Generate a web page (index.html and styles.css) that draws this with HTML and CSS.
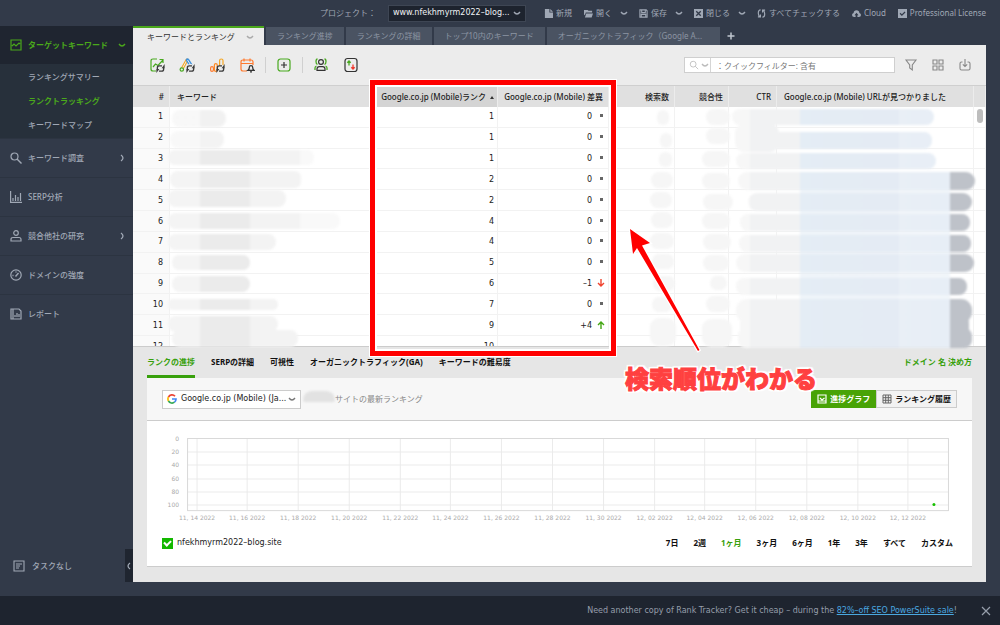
FILE: index.html
```html
<!DOCTYPE html>
<html lang="ja">
<head>
<meta charset="utf-8">
<title>Rank Tracker</title>
<link rel="stylesheet" href="styles.css">
</head>
<body>
<svg class="defs" aria-hidden="true">
  <symbol id="chev" viewBox="0 0 8 8"><path d="M1 3q1.500 2 3 2t3-2" fill="none" stroke="currentColor" stroke-width="1.300"/></symbol>
  <symbol id="sync" viewBox="0 0 12 12"><path d="M1.800 7V5Q1.800 2.500 4.500 2.500H8M10.200 5V7Q10.200 9.500 7.500 9.500H4" fill="none" stroke="#3b3b3b" stroke-width="1.800"/><path d="M7.500 5.500L11.500 0V5.500zM4.500 6.500L.5 12V6.500z" fill="#3b3b3b"/></symbol>
</svg>
<div class="app">
  <header class="topbar">
    <label for="project">プロジェクト：</label>
    <span class="combo"><select id="project"><option>www.nfekhmyrm2022–blog...</option></select><svg class="chev"><use href="#chev"/></svg></span>
    <button class="act"><svg viewBox="0 0 10 10"><path d="M1 0h5v4h4v6H1zM7 0l3 3H7z" fill="currentColor"/></svg>新規</button>
    <button class="act"><svg viewBox="0 0 10 10"><path d="M0 1h4l1 1h4v2H2L1 7 0 6zM2.500 5H10L8.500 9.500H1z" fill="currentColor"/></svg>開く</button>
    <button class="act more" aria-label="開くメニュー"><svg class="chev"><use href="#chev"/></svg></button>
    <button class="act"><svg viewBox="0 0 10 10"><path d="M1 1h7l1 1v7H1zM3 1v3h4V1M2.500 9V6h5v3" fill="none" stroke="currentColor" stroke-width="1.200"/></svg>保存</button>
    <button class="act more" aria-label="保存メニュー"><svg class="chev"><use href="#chev"/></svg></button>
    <button class="act"><svg viewBox="0 0 10 10"><path d="M0 0h10v10H0z" fill="currentColor"/><path d="M2.500 2.500l5 5M7.500 2.500l-5 5" stroke="#323a49" stroke-width="1.500"/></svg>閉じる</button>
    <button class="act more" aria-label="閉じるメニュー"><svg class="chev"><use href="#chev"/></svg></button>
    <button class="act"><svg viewBox="0 0 10 10"><path d="M4 1Q1.500 1 1.500 4v1q0 2 1.500 3.500M1 8.800h2.800V6M6 9q2.500 0 2.500-3V5q0-2-1.500-3.500M9 1.200H6.200V4" fill="none" stroke="currentColor" stroke-width="1.300"/></svg>すべてチェックする</button>
    <button class="act"><svg viewBox="0 0 10 10"><path d="M2.500 9Q0 9 0 6.800 0 5 1.800 4.500 2 1.500 5 1.500T8.200 4.500Q10 5 10 6.800 10 9 7.500 9H6V7h1.300L5 4.300 2.700 7H4v2z" fill="currentColor"/></svg>Cloud</button>
    <button class="act"><svg viewBox="0 0 10 10"><path d="M0 0h10v10H0z" fill="currentColor"/><path d="M2.300 4.800l2 2 3.500-3.500" fill="none" stroke="#323a49" stroke-width="1.400"/></svg>Professional License</button>
  </header>
  <div class="body">
    <nav class="side">
      <a class="item current" href="#"><svg viewBox="0 0 12 12"><path d="M1 1h10v10H1zM2 7l2-2 2 2 3-3 1 1" fill="none" stroke="currentColor" stroke-width="1.200"/></svg>ターゲットキーワード<svg class="chev end"><use href="#chev"/></svg></a>
      <div class="sub">
        <a href="#">ランキングサマリー</a>
        <a class="on" href="#">ランクトラッキング</a>
        <a href="#">キーワードマップ</a>
      </div>
      <a class="item" href="#"><svg viewBox="0 0 12 12"><circle cx="4.500" cy="4.500" r="3.500" fill="none" stroke="currentColor" stroke-width="1.200"/><path d="M7 7l4.500 4.500" stroke="currentColor" stroke-width="1.400"/></svg>キーワード調査<svg class="chev right end"><use href="#chev"/></svg></a>
      <a class="item" href="#"><svg viewBox="0 0 12 12"><path d="M.6 0v11.400H12M3 10V7M5.500 10V4M8 10V6M10.500 10V2" fill="none" stroke="currentColor" stroke-width="1.200"/></svg>SERP分析</a>
      <a class="item" href="#"><svg viewBox="0 0 12 12"><circle cx="6" cy="3" r="2.300" fill="none" stroke="currentColor" stroke-width="1.200"/><path d="M1 11V9.500Q1 7.500 3 7.500h6q2 0 2 2V11z" fill="none" stroke="currentColor" stroke-width="1.200"/></svg>競合他社の研究<svg class="chev right end"><use href="#chev"/></svg></a>
      <a class="item" href="#"><svg viewBox="0 0 12 12"><circle cx="6" cy="6" r="5.200" fill="none" stroke="currentColor" stroke-width="1.200"/><path d="M5.500 7.500L8.500 4M2.500 6.500h1M6 2.500v1" stroke="currentColor" stroke-width="1.400"/></svg>ドメインの強度</a>
      <a class="item" href="#"><svg viewBox="0 0 12 12"><path d="M3 1h6l2 2v8H3zM3 1H1v10h2M5 9V7M7 9V5M9 9V6" fill="none" stroke="currentColor" stroke-width="1.200"/></svg>レポート</a>
      <div class="tasks">
        <a class="item" href="#"><svg viewBox="0 0 12 12"><path d="M1 1h10v10H1zM3 4h6M3 6h4M3 8h3" fill="none" stroke="currentColor" stroke-width="1.100"/></svg>タスクなし</a>
        <button class="collapse" aria-label="サイドバーを閉じる"><svg class="chev left"><use href="#chev"/></svg></button>
      </div>
    </nav>
    <main class="main">
      <div class="tabs">
        <button class="tab active">キーワードとランキング<svg class="chev"><use href="#chev"/></svg></button>
        <button class="tab">ランキング進捗</button>
        <button class="tab">ランキングの詳細</button>
        <button class="tab">トップ10内のキーワード</button>
        <button class="tab wide">オーガニックトラフィック（Google A...</button>
        <button class="add" aria-label="タブを追加"><svg viewBox="0 0 8 8"><path d="M4 .5v7M.5 4h7" stroke="currentColor" stroke-width="1.500"/></svg></button>
      </div>
      <div class="toolbar">
        <button class="tool" aria-label="ランキングを更新"><svg viewBox="0 0 16 16"><path d="M8 2H4Q2 2 2 4v8q0 2 2 2h3M4 10l2.500-3L9 8.500 14 3M10.500 2.500H14V6" fill="none" stroke="#48a91f" stroke-width="1.200"/><use href="#sync" x="7" y="7" width="9" height="9"/></svg></button>
        <button class="tool" aria-label="Google広告データを更新"><svg viewBox="0 0 16 16"><path d="M3 12L8 3" stroke="#f5a623" stroke-width="3" stroke-linecap="round"/><path d="M3 12L8 3" stroke="#ececec"/><path d="M8.500 3L13 10" stroke="#4092dc" stroke-width="3.500" stroke-linecap="round"/><path d="M8.500 3L13 10" stroke="#ececec"/><circle cx="2.800" cy="12.500" r="1.700" fill="#ececec" stroke="#48a91f" stroke-width="1.200"/><circle cx="11.500" cy="11.500" r="4.500" fill="#ececec"/><use href="#sync" x="7" y="7" width="9" height="9"/></svg></button>
        <button class="tool" aria-label="アナリティクスを更新"><svg viewBox="0 0 16 16"><rect x="1.600" y="9.600" width="2.800" height="4.800" rx="1.400" fill="none" stroke="#ff7a2f" stroke-width="1.200"/><rect x="5.400" y="6.600" width="2.800" height="7.800" rx="1.400" fill="none" stroke="#ff8b25" stroke-width="1.200"/><path d="M10.600 9V3.500Q10.600 2 12.300 2T14 3.500V8" fill="none" stroke="#f5a623" stroke-width="1.200"/><use href="#sync" x="7" y="7" width="9" height="9"/></svg></button>
        <button class="tool" aria-label="スケジュール"><svg viewBox="0 0 16 16"><path d="M8 14H4q-2 0-2-2V5q0-2 2-2h8q2 0 2 2v3M2 6.500h12M5 1.500v3M11 1.500v3" fill="none" stroke="#ff7a2f" stroke-width="1.200"/><path d="M9 13.300q1.300-1 1.300-2.800 0-1.800 1.700-1.800t1.700 1.800q0 1.800 1.300 2.800zM11 14.800h2" fill="none" stroke="#333" stroke-width="1.300"/></svg></button>
        <span class="sep"></span>
        <button class="tool" aria-label="追加"><svg viewBox="0 0 16 16"><rect x="2" y="2" width="12" height="12" rx="2.500" fill="none" stroke="#48a91f" stroke-width="1.200"/><path d="M8 5v6M5 8h6" stroke="#333" stroke-width="1.200"/></svg></button>
        <span class="sep"></span>
        <button class="tool" aria-label="競合"><svg viewBox="0 0 16 16"><circle cx="8" cy="5" r="2.400" fill="none" stroke="#333" stroke-width="1.200"/><path d="M4 13.400V12q0-2.400 2.400-2.400h3.200Q12 9.600 12 12v1.400z" fill="none" stroke="#333" stroke-width="1.200"/><path d="M4.500 2Q3 2 3 4.500T4.500 7.500M11.500 2q1.500 0 1.500 2.500T11.500 7.500M2 13v-2q0-1.500 1.500-2M14 13v-2q0-1.500-1.500-2" fill="none" stroke="#48a91f" stroke-width="1.300"/></svg></button>
        <button class="tool" aria-label="ランク変動"><svg viewBox="0 0 16 16"><rect x="2" y="1.500" width="12" height="13" rx="2.500" fill="none" stroke="#333" stroke-width="1.200"/><path d="M6 8.500V4M4.300 5.700L6 4l1.700 1.700" fill="none" stroke="#48a91f" stroke-width="1.300"/><path d="M10 7.500V12M8.300 10.300L10 12l1.700-1.700" fill="none" stroke="#f03a2e" stroke-width="1.300"/></svg></button>
        <div class="search">
          <svg class="mag" viewBox="0 0 12 12"><circle cx="5" cy="5" r="3.500" fill="none" stroke="currentColor"/><path d="M7.500 7.500L11 11" stroke="currentColor"/></svg>
          <svg class="chev"><use href="#chev"/></svg>
          <input type="text" aria-label="クイックフィルター" placeholder="：クイックフィルター: 含有">
        </div>
        <button class="tool grey" aria-label="フィルター"><svg viewBox="0 0 16 16"><path d="M3 3h10L9.300 8v5L6.700 11V8z" fill="none" stroke="currentColor" stroke-width="1.100"/></svg></button>
        <button class="tool grey" aria-label="表示"><svg viewBox="0 0 16 16"><path d="M3 3h4v4H3zM9 3h4v4H9zM3 9h4v4H3zM9 9h4v4H9z" fill="none" stroke="currentColor" stroke-width="1.100"/></svg></button>
        <button class="tool grey" aria-label="エクスポート"><svg viewBox="0 0 16 16"><path d="M5.500 5H4.500Q3 5 3 6.500v5Q3 13 4.500 13h7q1.500 0 1.500-1.500v-5Q13 5 11.500 5h-1M8 2v7.500M5.800 7.300L8 9.500l2.200-2.200" fill="none" stroke="currentColor" stroke-width="1.100"/></svg></button>
      </div>

      <section class="grid">
        <div class="scroller">
          <table>
            <colgroup><col class="c-num"><col><col class="c-rank"><col class="c-diff"><col class="c-vol"><col class="c-comp"><col class="c-ctr"><col class="c-url"><col class="c-bar"></colgroup>
            <thead><tr><th>#</th><th class="left">キーワード</th><th class="sorted">Google.co.jp (Mobile)ランク <i class="up"></i></th><th>Google.co.jp (Mobile) 差異</th><th>検索数</th><th>競合性</th><th>CTR</th><th class="left">Google.co.jp (Mobile) URLが見つかりました</th><th></th></tr></thead>
            <tbody>
              <tr><td>1</td><td></td><td>1</td><td>0<i class="dot"></i></td><td></td><td></td><td></td><td></td><td></td></tr>
              <tr><td>2</td><td></td><td>1</td><td>0<i class="dot"></i></td><td></td><td></td><td></td><td></td><td></td></tr>
              <tr><td>3</td><td></td><td>1</td><td>0<i class="dot"></i></td><td></td><td></td><td></td><td></td><td></td></tr>
              <tr><td>4</td><td></td><td>2</td><td>0<i class="dot"></i></td><td></td><td></td><td></td><td></td><td></td></tr>
              <tr><td>5</td><td></td><td>2</td><td>0<i class="dot"></i></td><td></td><td></td><td></td><td></td><td></td></tr>
              <tr><td>6</td><td></td><td>4</td><td>0<i class="dot"></i></td><td></td><td></td><td></td><td></td><td></td></tr>
              <tr><td>7</td><td></td><td>4</td><td>0<i class="dot"></i></td><td></td><td></td><td></td><td></td><td></td></tr>
              <tr><td>8</td><td></td><td>5</td><td>0<i class="dot"></i></td><td></td><td></td><td></td><td></td><td></td></tr>
              <tr><td>9</td><td></td><td>6</td><td>–1<svg class="dir" viewBox="0 0 8 8"><path d="M4 0v7M1 4l3 3 3-3" fill="none" stroke="#f0432e" stroke-width="1.400"/></svg></td><td></td><td></td><td></td><td></td><td></td></tr>
              <tr><td>10</td><td></td><td>7</td><td>0<i class="dot"></i></td><td></td><td></td><td></td><td></td><td></td></tr>
              <tr><td>11</td><td></td><td>9</td><td>+4<svg class="dir" viewBox="0 0 8 8"><path d="M4 8V1M1 4l3-3 3 3" fill="none" stroke="#43a512" stroke-width="1.400"/></svg></td><td></td><td></td><td></td><td></td><td></td></tr>
              <tr><td>12</td><td></td><td>10</td><td></td><td></td><td></td><td></td><td></td><td></td></tr>
            </tbody>
          </table>
          <span class="scrollbar"></span>
        </div>
        <svg class="smudge-left" viewBox="0 0 220 262">
          <defs><linearGradient id="gl" gradientUnits="userSpaceOnUse" x1="0" y1="0" x2="200" y2="0">
            <stop offset=".2" stop-color="#f4f4f4"/><stop offset=".2" stop-color="#ebebeb"/><stop offset=".45" stop-color="#ebebeb"/><stop offset=".45" stop-color="#f3f3f3"/><stop offset=".7" stop-color="#f3f3f3"/><stop offset=".7" stop-color="#f9f9f9"/></linearGradient></defs>
          <g fill="url(#gl)" class="soft" transform="translate(-3)">
            <rect x="12" y="24" width="54" height="17" rx="8" opacity=".7"/>
            <rect x="10" y="45" width="54" height="17" rx="8" opacity=".6"/>
            <rect x="8" y="64" width="146" height="15" rx="7"/>
            <rect x="10" y="85" width="132" height="17" rx="8"/>
            <rect x="8" y="104" width="118" height="17" rx="8"/>
            <rect x="8" y="127" width="172" height="16" rx="8"/>
            <rect x="8" y="148" width="108" height="16" rx="8"/>
            <rect x="12" y="169" width="78" height="15" rx="7"/>
            <rect x="12" y="190" width="78" height="16" rx="8"/>
            <rect x="8" y="213" width="110" height="11" rx="5"/>
            <rect x="8" y="230" width="110" height="16" rx="8"/>
            <rect x="12" y="244" width="126" height="17" rx="8"/>
          </g>
        </svg>
        <svg class="smudge-right" viewBox="0 0 346 264">
          <defs><linearGradient id="gr" gradientUnits="userSpaceOnUse" x1="0" y1="0" x2="346" y2="0">
            <stop offset=".318" stop-color="#f7f7f7"/><stop offset=".318" stop-color="#f1f2f3"/><stop offset=".462" stop-color="#f1f2f3"/><stop offset=".462" stop-color="#e4edf5"/><stop offset=".75" stop-color="#e4ebf4"/><stop offset=".75" stop-color="#e9eff6"/><stop offset=".896" stop-color="#e7eef6"/><stop offset=".896" stop-color="#bec2c9"/></linearGradient></defs>
          <g fill="#f6f6f6" class="soft">
            <rect x="17" y="24" width="12" height="15" rx="6"/><rect x="20" y="47" width="12" height="15" rx="6"/><rect x="19" y="66" width="13" height="15" rx="6"/><rect x="11" y="86" width="22" height="16" rx="8"/><rect x="10" y="106" width="22" height="16" rx="8"/><rect x="11" y="126" width="22" height="16" rx="8"/><rect x="10" y="147" width="24" height="16" rx="8"/><rect x="12" y="168" width="22" height="15" rx="7"/><rect x="13" y="190" width="22" height="15" rx="7"/><rect x="12" y="211" width="20" height="15" rx="7"/><rect x="10" y="232" width="26" height="28" rx="9"/>
            <rect x="66" y="23" width="24" height="16" rx="8"/><rect x="66" y="42" width="24" height="16" rx="8"/><rect x="62" y="65" width="28" height="16" rx="8"/><rect x="62" y="87" width="28" height="16" rx="8"/><rect x="63" y="108" width="30" height="16" rx="8"/><rect x="62" y="127" width="28" height="16" rx="8"/><rect x="63" y="148" width="28" height="16" rx="8"/><rect x="63" y="169" width="26" height="16" rx="8"/><rect x="70" y="190" width="17" height="14" rx="7"/><rect x="66" y="210" width="24" height="16" rx="8"/><rect x="62" y="233" width="30" height="28" rx="9"/>
          </g>
          <g fill="url(#gr)" class="soft">
            <rect x="92" y="23" width="202" height="16" rx="8"/><rect x="95" y="38" width="44" height="28" rx="9"/><rect x="108" y="46" width="184" height="17" rx="8"/>
            <rect x="96" y="67" width="200" height="16" rx="8"/>
            <rect x="98" y="86" width="237" height="18" rx="9"/>
            <rect x="108" y="107" width="224" height="18" rx="9"/>
            <rect x="100" y="128" width="230" height="17" rx="8"/>
            <rect x="99" y="149" width="232" height="17" rx="8"/>
            <rect x="96" y="168" width="238" height="18" rx="9"/>
            <rect x="96" y="192" width="231" height="17" rx="8"/>
            <rect x="96" y="213" width="236" height="24" rx="11"/>
            <rect x="100" y="228" width="229" height="24" rx="8"/>
            <rect x="98" y="242" width="234" height="20" rx="8"/>
            <rect x="160" y="90" width="150" height="170"  opacity=".6"/>
          </g>
        </svg>
        <div class="highlight"></div>
        <svg class="arrow" viewBox="0 0 76 128"><path d="M3 3L23 17 15 19.500 72.500 124 71 125 10 22 6 28z" fill="#f00" stroke="#fff" stroke-width="2.500" paint-order="stroke"/></svg>
        <p class="note">検索順位がわかる</p>
      </section>

      <section class="lower">
        <div class="ltabs">
          <button class="ltab on">ランクの進捗</button><button class="ltab">SERPの詳細</button><button class="ltab">可視性</button><button class="ltab">オーガニックトラフィック(GA)</button><button class="ltab">キーワードの難易度</button>
          <a class="domain" href="#">ドメイン 名 決め方</a>
        </div>
        <div class="card">
          <div class="cardhead">
            <span class="engine">
              <svg viewBox="0 0 10 10" fill="none" stroke-width="1.700"><path d="M8 2.200A4 4 0 0 0 1.500 3" stroke="#ea4335"/><path d="M1.500 3a4 4 0 0 0 0 4" stroke="#fbbc05"/><path d="M1.500 7a4 4 0 0 0 6 1.200" stroke="#34a853"/><path d="M7.500 8.200Q9 7 9 5H5" stroke="#4285f4"/></svg>
              <select aria-label="検索エンジン"><option>Google.co.jp (Mobile) (Ja...</option></select><svg class="chev"><use href="#chev"/></svg>
            </span>
            <i class="blob"></i><span class="caption">サイトの最新ランキング</span>
            <div class="switch">
              <button class="sw on"><svg viewBox="0 0 10 10"><path d="M1 1h8v8H1zM3 4l2 2 2.500-2M1 7h8" fill="none" stroke="currentColor" stroke-width="1.200"/></svg>進捗グラフ</button>
              <button class="sw"><svg viewBox="0 0 10 10"><path d="M1 1h8v8H1zM3.700 1v8M6.300 1v8M1 3.700h8M1 6.300h8" fill="none" stroke="#666" stroke-width="1"/></svg>ランキング履歴</button>
            </div>
          </div>
          <svg class="chart" viewBox="0 0 824 105" role="img" aria-label="進捗グラフ">
            <path d="M50 17.500V89M100 17.500V89M151 17.500V89M202 17.500V89M253 17.500V89M303 17.500V89M354 17.500V89M405 17.500V89M456 17.500V89M507 17.500V89M557 17.500V89M608 17.500V89M659 17.500V89M710 17.500V89M760 17.500V89M41 31h760M41 44h760M41 58h760M41 71h760M41 84h760" fill="none" stroke="#ebebeb"/>
            <rect x="40.500" y="17.500" width="760" height="72" fill="none" stroke="#d9d9d9"/>
            <g class="ylab"><text x="32" y="20">0</text><text x="32" y="33">20</text><text x="32" y="46">40</text><text x="32" y="60">60</text><text x="32" y="73">80</text><text x="32" y="86">100</text></g>
            <g class="xlab"><text x="50" y="99">11, 14 2022</text><text x="100" y="99">11, 16 2022</text><text x="151" y="99">11, 18 2022</text><text x="202" y="99">11, 20 2022</text><text x="253" y="99">11, 22 2022</text><text x="303" y="99">11, 24 2022</text><text x="354" y="99">11, 26 2022</text><text x="405" y="99">11, 28 2022</text><text x="456" y="99">11, 30 2022</text><text x="507" y="99">12, 02 2022</text><text x="557" y="99">12, 04 2022</text><text x="608" y="99">12, 06 2022</text><text x="659" y="99">12, 08 2022</text><text x="710" y="99">12, 10 2022</text><text x="760" y="99">12, 12 2022</text></g>
            <circle cx="786" cy="83.500" r="1.500" fill="#17c000"/>
          </svg>
          <div class="cardfoot">
            <label class="site"><input type="checkbox" checked>nfekhmyrm2022–blog.site</label>
            <div class="ranges"><button>7日</button><button>2週</button><button class="on">1ヶ月</button><button>3ヶ月</button><button>6ヶ月</button><button>1年</button><button>3年</button><button>すべて</button><button>カスタム</button></div>
          </div>
        </div>
      </section>
    </main>
  </div>
  <footer class="promo">
    <span>Need another copy of Rank Tracker? Get it cheap – during the <a href="#">82%–off SEO PowerSuite sale</a>!</span>
    <button aria-label="閉じる"><svg viewBox="0 0 10 10"><path d="M1 1l8 8M9 1L1 9" stroke="currentColor" stroke-width="1.200"/></svg></button>
  </footer>
</div>
</body>
</html>
```
FILE: styles.css
```css
* { box-sizing: border-box; }
body { margin: 0; font: 8px/12px "Noto Sans", "Noto Sans CJK JP", sans-serif; background: #323a49; color: #222; }
button, input, select { font: inherit; color: inherit; background: none; border: 0; padding: 0; margin: 0; appearance: none; }
button { display: flex; align-items: center; white-space: nowrap; }
a { color: inherit; text-decoration: none; }
svg { display: block; flex: none; }
.defs { position: absolute; width: 0; height: 0; }
.chev { width: 8px; height: 8px; }
.right { transform: rotate(-90deg); }
.left.chev { transform: rotate(90deg); }
.app { min-height: 100vh; display: flex; flex-direction: column; }

.combo select, .engine select, td, .site, .promo { font-family: "DejaVu Sans", "Noto Sans CJK JP", sans-serif; font-size: 8px; }

.topbar { height: 26px; display: flex; align-items: center; justify-content: flex-end; gap: 12px; padding-right: 14px; color: #a0a8b5; }
.act { gap: 3px; }
.act svg { width: 9px; height: 9px; }
.act.more { margin: 0 -1px 0 -4px; }
.act.more svg { width: 8px; height: 8px; }
.combo { display: flex; align-items: center; width: 138px; height: 17px; padding: 0 4px; margin-right: 6px; background: #1d232e; border: 1px solid #3e4654; }
.combo select { flex: 1; min-width: 0; color: #f0f2f5; }

.body { flex: 1; display: flex; }
.side { width: 133px; flex: none; display: flex; flex-direction: column; color: #a0a8b5; font-weight: 500; }
.item { display: flex; align-items: center; gap: 6px; height: 39px; padding: 0 7px 0 10px; border-top: 1px solid #2c3441; }
.item > svg:first-child { width: 12px; height: 12px; }
.end { margin-left: auto; }
.current { background: #1f2530; color: #4aa81b; height: 38px; font-weight: 700; border: 0; }
.sub { background: #27303b; padding: 1px 0 1px 28px; }
.sub a { display: block; line-height: 24px; }
.sub .on { color: #4aa81b; font-weight: 700; }
.tasks { margin-top: auto; margin-bottom: 14px; display: flex; justify-content: space-between; align-items: flex-end; }
.tasks .item { border: 0; height: 33px; padding-left: 13px; gap: 7px; }
.collapse { width: 8px; height: 33px; background: #1f2530; }

.main { flex: 1; min-width: 0; margin: 0 14px 14px 0; background: #e6e6e6; display: flex; flex-direction: column; }
.tabs { display: flex; align-items: stretch; gap: 2px; height: 19px; background: #323a49; }
.tab { padding: 0 11px; background: #4a5362; color: #8c95a3; margin-top: 1px; }
.tab.wide { min-width: 173px; }
.tab.active { width: 131px; margin-top: 0; padding: 0 10px 0 14px; justify-content: space-between; background: #ececec; color: #333; border-top: 2px solid #4aa81b; }
.tab.active svg { color: #aaa; }
.add { color: #c0c6cf; margin-left: 5px; }
.add svg { width: 8px; height: 8px; }

.toolbar { height: 41px; display: flex; align-items: center; gap: 14px; padding: 0 13px 0 16px; background: #ececec; border-bottom: 1px solid #cfcfcf; }
.tool svg { width: 16px; height: 16px; }
.grey { color: #888; }
.grey + .grey { margin-left: -3px; }
.sep { width: 1px; height: 16px; background: #d0d0d0; margin: 0 -4px; }
.search { margin: 0 -6px 0 auto; display: flex; align-items: center; width: 211px; height: 16px; border: 1px solid #cfcfcf; background: #fff; color: #bbb; }
.search .mag { width: 10px; height: 10px; margin: 0 2px 0 4px; }
.search .chev { margin-right: 1px; }
.search input { flex: 1; min-width: 0; height: 14px; padding-left: 5px; border-left: 1px solid #d5d5d5; }
.search input::placeholder { color: #777; opacity: 1; }

.grid { position: relative; }
.scroller { position: relative; height: 261px; overflow: hidden; background: #fff; border-bottom: 1px solid #ccc; }
table { width: 100%; height: 271px; border-collapse: separate; border-spacing: 0; table-layout: fixed; }
.c-num { width: 37px; } .c-rank { width: 122px; } .c-diff { width: 111px; } .c-vol { width: 66px; }
.c-comp { width: 54px; } .c-ctr { width: 48px; } .c-url { width: 197px; } .c-bar { width: 12px; }
th { height: 21px; padding: 0 5px 0 0; background: #e0e0e0; border-right: 1px solid #ececec; font-weight: 500; color: #222; text-align: right; white-space: nowrap; }
th.left { text-align: left; padding-left: 7px; }
th.sorted { background: #d4d4d4; padding-right: 3px; }
.up { display: inline-block; border: 2px solid transparent; border-top: 0; border-bottom: 3px solid #333; margin-left: 2px; vertical-align: 1px; }
td { padding: 1px 3px 0 0; text-align: right; border-right: 1px solid #f2f2f2; border-bottom: 1px solid #f2f2f2; }
td:first-child { padding-right: 6px; background: #fafafa; }
.dot { display: inline-block; width: 3px; height: 3px; background: #666; margin: 0 2px 2px 8px; }
.dir { display: inline-block; width: 8px; height: 8px; margin-left: 5px; vertical-align: -1px; }
.scrollbar { position: absolute; right: 3px; top: 23px; width: 6px; height: 14px; border-radius: 3px; background: #bdbdbd; }
.soft { filter: blur(1px); }
.smudge-left { position: absolute; left: 30px; top: 0; width: 220px; height: 262px; }
.smudge-right { position: absolute; right: 0; top: 0; width: 346px; height: 264px; }
.highlight { position: absolute; right: 370px; top: -6px; width: 246px; height: 276px; border: 5px solid #f00; box-shadow: 0 0 0 1px #fff, inset 0 0 0 2px #fff; }
.arrow { position: absolute; right: 283px; top: 140px; width: 76px; height: 128px; }
.note { position: absolute; right: 169px; top: 274px; margin: 0; font-family: "Noto Sans CJK JP", sans-serif; font-size: 24px; line-height: 36px; font-weight: 900; color: #ff4040; white-space: nowrap; -webkit-text-stroke: 1px #ff4040; text-shadow: 2px 0 1px #fff, -2px 0 1px #fff, 0 2px 1px #fff, 0 -2px 1px #fff, 2px 2px 1px #fff, -2px -2px 1px #fff, 2px -2px 1px #fff, -2px 2px 1px #fff; }

.lower { flex: 1; padding: 0 14px 15px; display: flex; flex-direction: column; }
.ltabs { display: flex; gap: 16px; height: 31px; font-weight: 700; color: #111; }
.ltab { padding-top: 2px; border-bottom: 3px solid transparent; }
.ltab.on { color: #38a00c; border-color: #38a00c; }
.domain { margin-left: auto; color: #38a00c; line-height: 30px; }
.card { flex: 1; background: #fff; border-bottom: 1px solid #ccc; display: flex; flex-direction: column; }
.cardhead { display: flex; align-items: center; height: 43px; padding: 0 15px; background: #f7f7f7; border-bottom: 1px solid #ccc; }
.engine { display: flex; align-items: center; width: 139px; height: 19px; padding: 0 4px; gap: 4px; background: #fff; border: 1px solid #ccc; }
.engine > svg:first-child { width: 10px; height: 10px; }
.engine select { flex: 1; min-width: 0; }
.engine .chev { color: #777; margin-left: -4px; }
.blob { width: 32px; height: 11px; margin: 0 0 6px 2px; border-radius: 16px 16px 4px 4px; background: #e2e2e2; filter: blur(1px); }
.caption { color: #888; }
.switch { display: flex; margin-left: auto; font-weight: 700; color: #111; }
.sw { height: 18px; padding: 0 5px; gap: 3px; border: 1px solid #ccc; background: #f2f2f2; }
.sw.on { background: #48a306; border-color: #48a306; color: #fff; }
.sw svg { width: 10px; height: 10px; }
.chart { width: 100%; height: auto; }
.chart text { font: 6px "DejaVu Sans", sans-serif; fill: #aaa; }
.ylab { text-anchor: end; }
.xlab { text-anchor: middle; }
.cardfoot { display: flex; align-items: center; justify-content: space-between; padding: 11px 19px 0 15px; }
.site { display: flex; align-items: center; gap: 4px; }
.site input { width: 11px; height: 11px; background: #13b800; display: grid; place-items: center; }
.site input::after { content: ""; width: 5px; height: 3px; border: solid #fff; border-width: 0 0 2px 2px; transform: translateY(-1px) rotate(-45deg); }
.ranges { display: flex; gap: 15px; font-weight: 700; color: #111; }
.ranges .on { color: #38a00c; }

.promo { height: 29px; display: flex; align-items: center; justify-content: flex-end; gap: 24px; padding-right: 9px; background: #1e242f; color: #969eab; }
.promo a { color: #4aa8e0; text-decoration: underline; }
.promo svg { width: 10px; height: 10px; }
```
